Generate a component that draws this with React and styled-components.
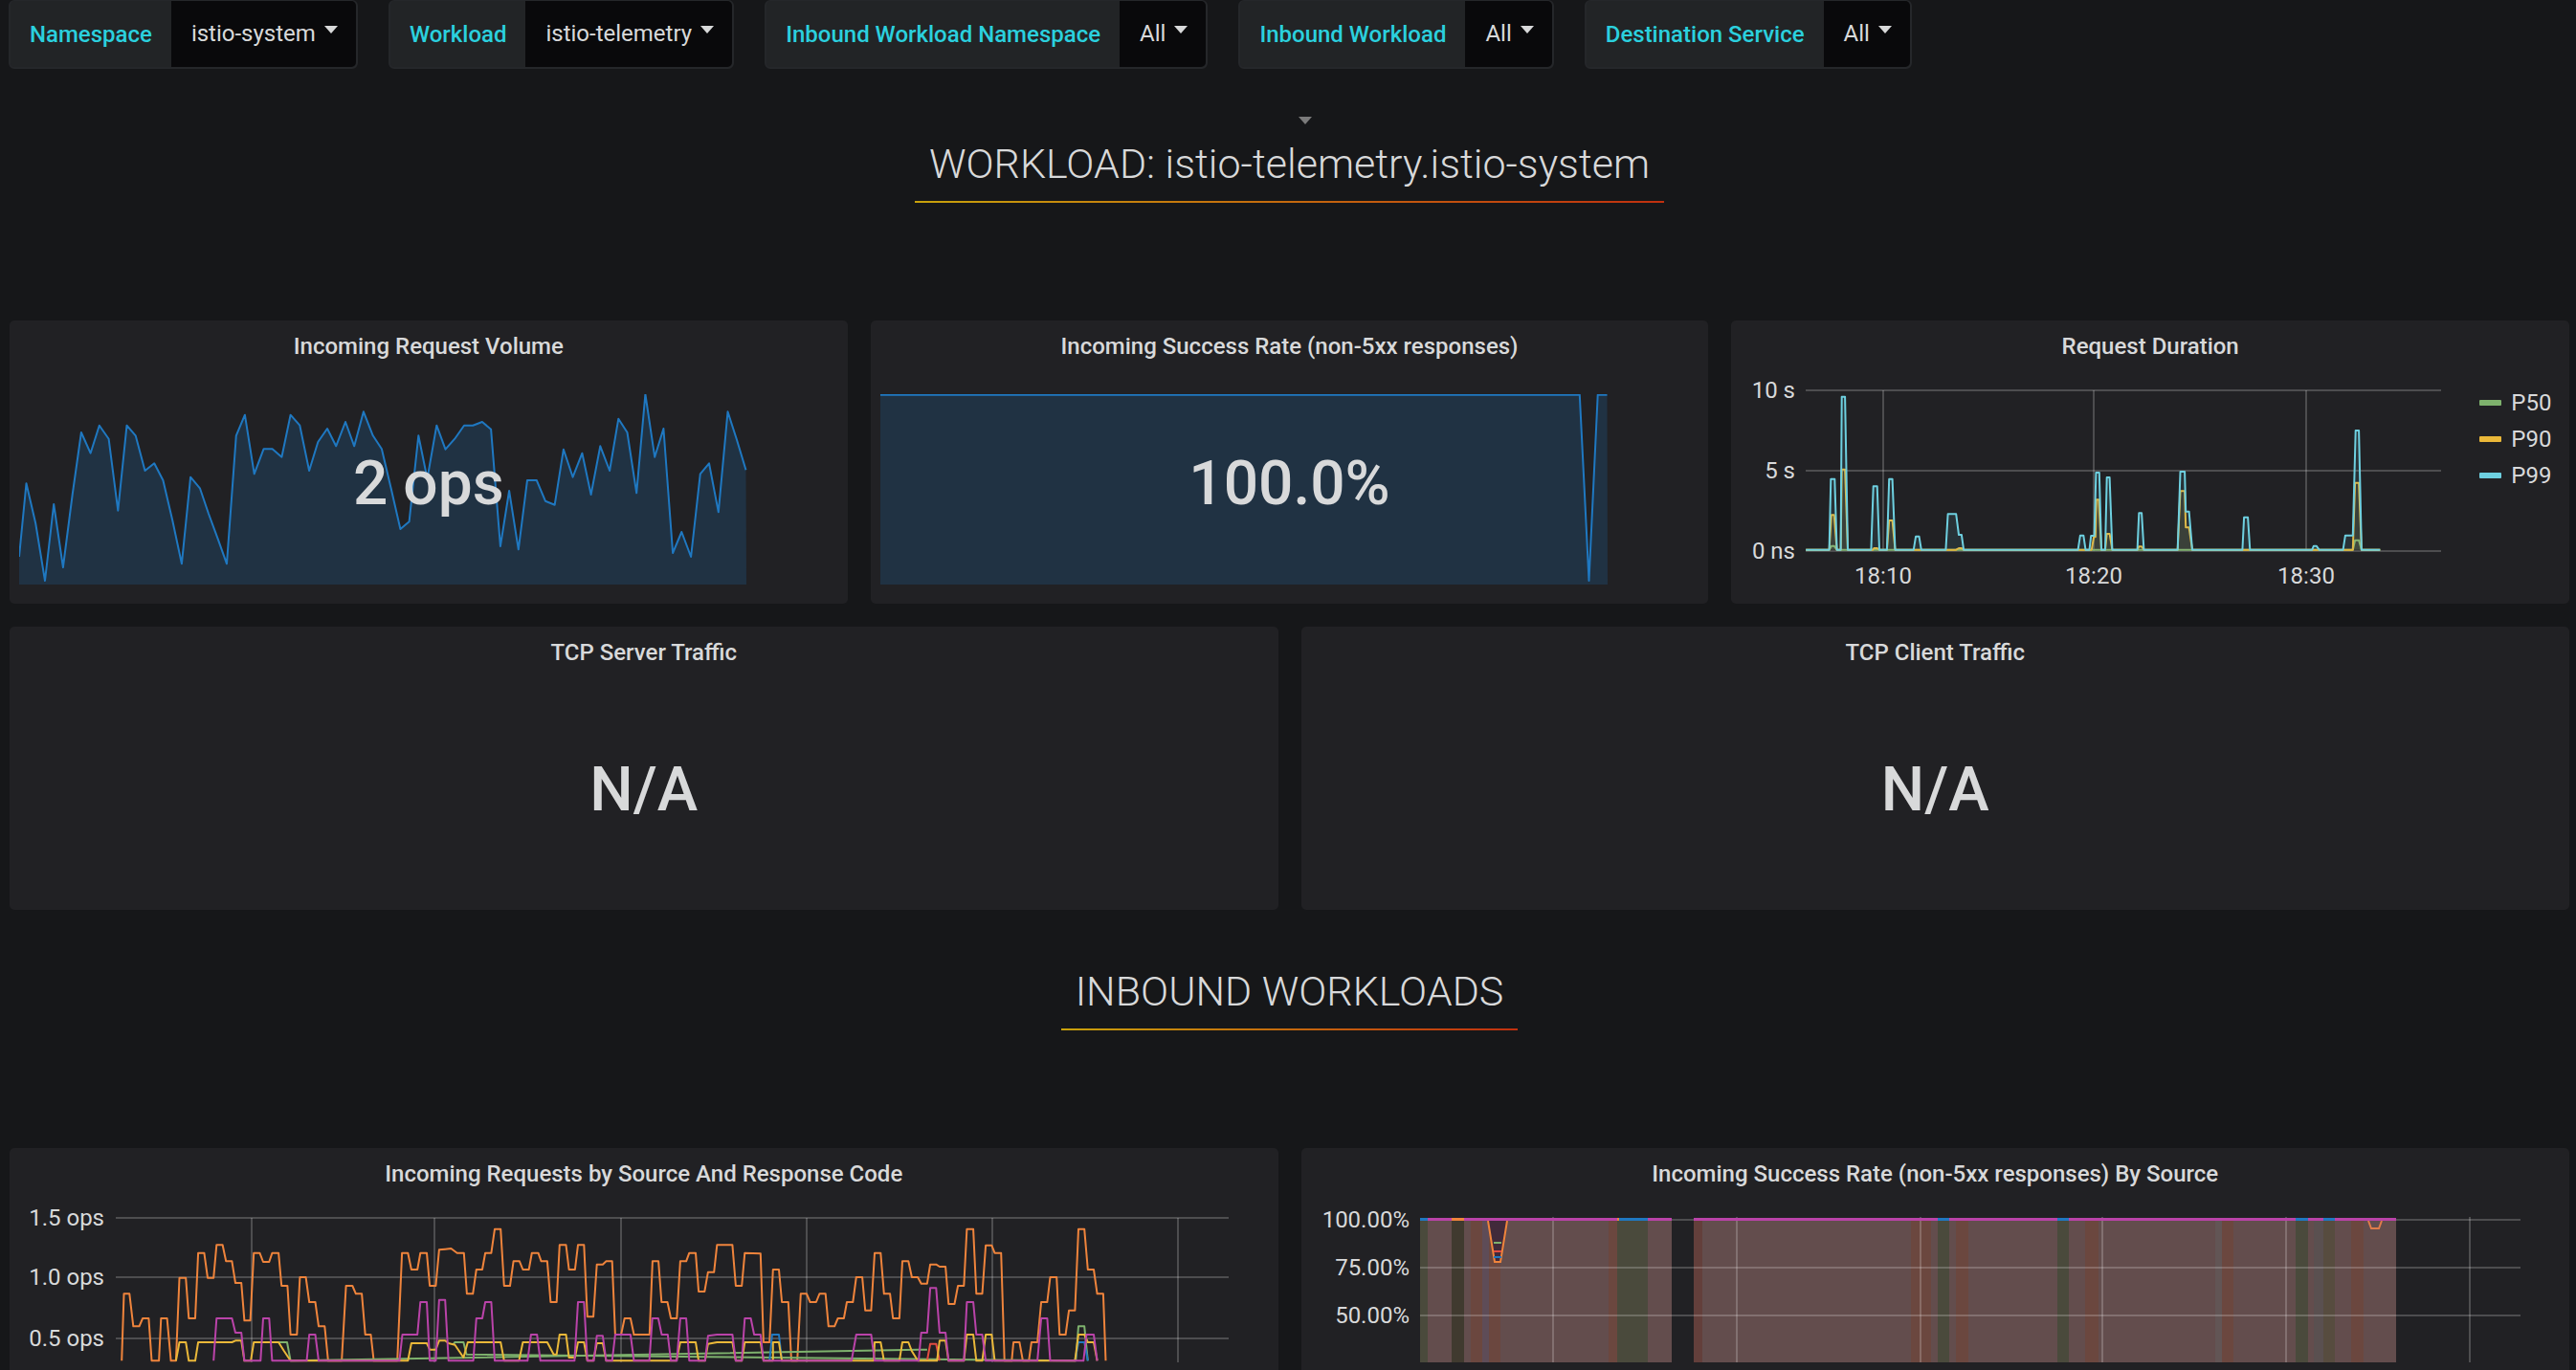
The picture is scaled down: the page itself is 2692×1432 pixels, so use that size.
import React from 'react';
import styled, { createGlobalStyle } from 'styled-components';

const GlobalStyle = createGlobalStyle`
  html, body {
    margin: 0;
    height: 100%;
    background: #161719;
    overflow: hidden;
  }
  #root {
    height: 100%;
  }
`;

const Page = styled.div`
  height: 1432px;
  overflow: hidden;
  padding: 0 7px 0 10px;
  box-sizing: border-box;
  font-family: Roboto, "Liberation Sans", sans-serif;
  color: #d8d9da;
`;

const TemplateBar = styled.div`
  display: flex;
  gap: 32px;
  height: 72px;
  margin-left: -1px;
`;

const VarGroup = styled.div`
  display: flex;
  height: 72px;
  box-sizing: border-box;
  background: #222426;
  border: 2px solid #25272a;
  border-top-width: 1px;
  border-radius: 6px;
  font-size: 24px;
  line-height: 70px;
`;

const VarLabel = styled.div`
  padding: 0 20px;
  font-weight: 500;
  color: #2bd0de;
`;

const VarValue = styled.div`
  display: flex;
  align-items: center;
  gap: 9px;
  padding: 0 19px 2px 21px;
  background: #09090b;
  border-radius: 0 5px 5px 0;
  color: #d8d9da;
`;

const Caret = styled.span`
  width: 0;
  height: 0;
  margin-top: -8px;
  border-left: 7px solid transparent;
  border-right: 7px solid transparent;
  border-top: 8px solid #d8d9da;
`;

const CollapseCaret = styled.div`
  width: 0;
  height: 0;
  margin: 50px auto 0 1347px;
  border-left: 7px solid transparent;
  border-right: 7px solid transparent;
  border-top: 8px solid #7b7b7b;
`;

const HeadingRow = styled.div`
  display: flex;
  justify-content: center;
  margin-top: ${(p) => p.$top}px;
  margin-bottom: ${(p) => p.$bottom}px;
`;

const Heading = styled.h2`
  margin: 0;
  padding: 0 15px 9px;
  font-size: 43px;
  font-weight: 300;
  line-height: 60px;
  color: #d8d9da;
  border-bottom: 2px solid;
  border-image: linear-gradient(90deg, #c8a20c, #c0300f) 1;
`;

const PanelRow = styled.div`
  display: grid;
  grid-template-columns: repeat(${(p) => p.$cols}, 1fr);
  gap: 24px;
  margin-bottom: 24px;
`;

const Panel = styled.section`
  position: relative;
  height: ${(p) => p.$height || 296}px;
  background: #212124;
  border-radius: 5px;
  box-sizing: border-box;
`;

const PanelTitle = styled.h3`
  margin: 0;
  height: 54px;
  font-size: 24px;
  line-height: 54px;
  font-weight: 500;
  text-align: center;
  color: #d8d9da;
`;

const BigValue = styled.div`
  position: absolute;
  left: 0;
  right: 0;
  top: 134px;
  font-size: 64px;
  line-height: 74px;
  font-weight: 500;
  text-align: center;
  color: #d8d9da;
`;

const Spark = styled.svg`
  display: block;
  margin: 23px 0 0 10px;
`;

const GraphBody = styled.div`
  display: flex;
`;

const Graph = styled.svg`
  display: block;
  flex: none;
`;

const Legend = styled.ul`
  list-style: none;
  margin: 13px 0 0 12px;
  padding: 0;
`;

const LegendItem = styled.li`
  display: flex;
  align-items: center;
  gap: 10px;
  height: 38px;
  font-size: 24px;
`;

const Swatch = styled.i`
  width: 23px;
  height: 6px;
  border-radius: 1px;
  background: ${(p) => p.$color};
`;

const AxisText = styled.text`
  font-size: 24px;
  fill: #d8d9da;
  text-anchor: ${(p) => p.$anchor || 'end'};
`;

const GridLine = styled.line`
  stroke: #fff;
  stroke-opacity: 0.2;
  stroke-width: 2;
`;

const Series = styled.polyline`
  fill: ${(p) => (p.$fill ? p.$color : 'none')};
  fill-opacity: ${(p) => (p.$fill ? 0.1 : 1)};
  stroke: ${(p) => p.$color};
  stroke-width: ${(p) => p.$width || 2};
  stroke-linejoin: round;
`;

const parse = (s, fx, fy) =>
  s.trim().split(/\s+/).map((pair) => {
    const [x, y] = pair.split(',').map(Number);
    return `${(+fx(x).toFixed(1))},${(+fy(y).toFixed(1))}`;
  }).join(' ');

/* ---- data, read off the screenshot ---- */

const volume = `35,775 48,545 65,670 82,850 98,610 115,808 132,580 148,385 165,450 181,363 198,405 215,630 231,363 247,395 264,505 281,482 297,535 314,660 331,797 347,525 364,560 380,640 397,720 413,797 430,395 446,330 463,515 480,437 496,437 513,462 529,330 546,363 563,505 579,415 596,373 612,428 629,352 645,428 662,320 679,395 695,437 712,560 729,688 745,665 762,395 778,530 795,363 811,438 828,405 845,363 861,363 878,352 894,375 911,742 927,568 944,752 960,535 977,535 993,600 1010,612 1026,438 1043,525 1060,450 1076,580 1093,428 1110,505 1126,342 1142,385 1159,575 1175,265 1192,462 1208,373 1225,763 1241,697 1258,775 1275,515 1291,482 1308,635 1325,320 1341,405 1358,503`;
const success = `35,267 1308,267 1325,850 1341,267 1358,267`;

const p99 = `155,752 198,752 201,530 208,530 212,752 219,752 221,272 227,272 232,752 275,752 279,553 286,553 290,752 304,752 308,530 314,530 319,752 353,752 357,710 363,710 367,752 412,752 416,640 431,640 436,705 441,705 445,752 655,752 659,707 665,707 669,752 676,752 679,708 685,708 688,510 694,510 698,752 705,752 708,525 713,525 718,752 764,752 767,637 772,637 776,752 838,752 843,507 851,507 853,632 859,632 865,752 957,752 960,650 967,650 971,752 1085,752 1088,740 1093,740 1098,752 1142,752 1146,707 1160,707 1165,378 1171,378 1176,752 1210,752`;
const p90 = `155,752 198,752 202,643 207,643 212,752 219,752 221,500 227,500 232,752 278,752 280,747 286,747 290,752 304,752 308,660 314,660 319,752 431,752 436,747 441,747 445,752 680,752 684,712 687,712 689,595 693,595 698,752 705,752 708,702 713,702 718,752 764,752 767,742 772,742 776,752 838,752 843,568 851,568 853,682 859,682 865,752 1160,752 1164,542 1171,542 1176,752 1210,752`;
const p50 = `155,752 198,752 202,740 207,740 212,752 1160,752 1164,722 1171,722 1176,752 1210,752`;

// left half of the chart comes from one crop, right half from the next
const requests = [
  {
    color: '#EF843C',
    a: `285,700 290,490 303,490 312,592 326,592 334,567 348,567 355,700 372,700 377,567 391,567 400,700 412,700 420,440 435,440 442,567 457,567 464,362 478,362 486,440 500,440 507,337 521,337 529,388 543,388 551,456 565,456 572,574 586,574 594,362 608,362 616,390 630,390 637,362 652,362 659,465 673,465 680,618 695,618 702,438 716,438 724,516 738,516 746,592 760,592 768,700 800,700 810,465 825,465 833,490 847,490 855,618 868,618 875,700 930,700 941,362 955,362 963,414 977,414 984,362 999,362 1006,465 1020,465 1028,352 1042,350 1056,348 1070,362 1086,362 1093,490 1107,490 1115,414 1129,414 1136,362 1150,362 1158,287 1172,287 1180,465 1194,465 1202,388 1216,388 1224,414 1238,414 1245,362 1260,362 1267,388 1281,388 1289,516 1303,516 1310,337 1325,337 1332,414 1346,414 1353,337 1367,337 1375,562 1389,562 1397,398 1411,398 1419,388 1433,388 1440,618 1454,618 1462,567 1476,567 1484,618`,
    b: `5,618 42,618 49,388 63,388 70,516 84,516 92,567 106,567 114,388 128,388 135,362 150,362 157,483 171,483 179,422 193,422 200,337 236,337 244,465 258,465 265,362 302,364 309,642 323,642 331,414 345,414 352,516 367,516 374,700 388,700 396,490 410,490 418,516 432,516 440,490 454,490 461,592 475,592 483,567 497,567 504,516 518,516 526,438 540,438 547,542 561,542 569,362 583,362 591,490 605,490 612,567 627,567 634,388 648,388 656,438 670,438 678,458 692,458 699,398 713,398 721,405 735,405 742,522 756,522 764,465 778,465 785,287 800,287 807,490 821,490 829,338 843,338 850,362 865,362 873,700 890,700 894,642 908,642 916,700 930,700 936,642 950,642 959,516 973,516 980,438 995,438 1002,618 1016,618 1024,542 1038,542 1046,287 1060,287 1068,414 1082,414 1090,490 1104,490 1110,700`,
  },
  {
    color: '#7EB26D',
    a: `652,642 672,642 680,700`,
    b: `672,665 692,665`,
  },
  {
    color: '#7EB26D',
    a: `1060,650 1065,642 1085,642 1092,680`,
    b: `1040,700 1046,592 1060,592 1068,700`,
  },
  {
    color: '#1F78C1',
    b: `323,700 329,618 345,618 352,700`,
  },
  {
    color: '#1F78C1',
    b: `1038,700 1046,642 1060,642 1068,700`,
  },
  {
    color: '#E24D42',
    b: `692,700 699,647 713,647 721,700`,
  },
  {
    color: '#EAB839',
    a: `412,700 420,642 435,642 442,700 457,700 464,642 543,642 551,637 565,637 572,700 587,700 594,642 652,642 665,670 680,700 955,700 963,645 999,645 1006,665 1020,665 1028,637 1042,637 1050,645 1065,650 1085,690 1095,642 1172,642 1180,700 1215,700 1224,642 1281,642 1296,680 1303,680 1310,618 1325,618 1332,690 1346,690 1353,642 1367,642 1375,700 1389,700 1397,645 1411,645 1419,700`,
    b: `105,700 114,642 150,642 157,700 172,700 179,647 200,642 236,642 244,700 258,700 265,642 302,642 309,700 331,700 331,642 345,642 352,700 567,700 569,642 583,642 591,700 627,700 634,642 648,642 656,670 670,700 715,700 721,637 735,637 742,700 778,700 785,618 800,618 807,700 821,700 829,618 843,618 850,700 1038,700 1046,618 1060,618 1068,642 1082,642 1090,700`,
  },
  {
    color: '#BA43A9',
    a: `500,700 507,567 543,567 551,612 565,612 572,700 610,700 616,567 630,567 637,700 718,700 724,618 738,618 746,700 935,700 942,618 977,618 984,516 999,516 1006,700 1020,700 1028,509 1042,509 1050,700 1108,700 1115,567 1129,567 1136,516 1150,516 1158,700 1235,700 1243,618 1257,618 1265,700 1345,700 1353,516 1367,516 1375,700 1390,700 1397,622 1411,622 1419,700 1433,700 1440,618 1476,618 1484,700 1520,700 1527,567 1541,567 1549,618 1563,618`,
    b: `92,700 106,700 114,567 128,567 135,700 172,700 179,622 200,618 236,618 244,700 258,700 265,567 279,567 287,618 302,618 309,700 515,700 526,618 561,618 569,700 672,700 678,612 692,612 699,472 713,472 721,612 735,612 742,700 778,700 785,516 800,516 807,618 821,618 829,700 950,700 959,567 973,567 980,700 1058,700 1065,618 1082,618 1090,700`,
  },
];

// page x ranges of the coloured stripes in the success rate chart
const BASE = '#634d4d';
const GREEN = '#4a4a3c';
const RED = '#6b473f';
const stripes = [
  [1484, 1492, GREEN], [1517, 1530, '#403a2f'], [1537, 1549, RED], [1549, 1556, '#5e4c57'], [1556, 1568, RED],
  [1681, 1690, RED], [1690, 1722, GREEN], [1770, 1779, '#633f3b'], [1997, 2018, RED], [2025, 2037, GREEN],
  [2044, 2057, RED], [2150, 2162, GREEN], [2179, 2193, RED], [2315, 2322, '#625555'], [2322, 2334, RED],
  [2399, 2412, GREEN], [2418, 2428, '#5a5050'], [2428, 2440, '#574c3f'], [2457, 2470, RED],
];
const topTicks = [
  [1484, 1492, '#1F78C1'], [1517, 1530, '#EF843C'], [1690, 1692, '#EF843C'], [1692, 1722, '#1F78C1'],
  [2025, 2037, '#1F78C1'], [2150, 2162, '#1F78C1'], [2399, 2412, '#1F78C1'], [2428, 2440, '#1F78C1'],
];

const variables = [
  ['Namespace', 'istio-system'],
  ['Workload', 'istio-telemetry'],
  ['Inbound Workload Namespace', 'All'],
  ['Inbound Workload', 'All'],
  ['Destination Service', 'All'],
];

/* ---- charts ---- */

function Sparkline({ points }) {
  const fx = (x) => (x - 35) / 1.742;
  const fy = (y) => (y - 265) / 3;
  const line = parse(points, fx, fy);
  return (
    <Spark width="762" height="199" viewBox="0 0 762 199">
      <polygon points={`0,199 ${line} 760,199`} fill="#1F78C1" fillOpacity="0.2" />
      <Series points={line} $color="#1F78C1" />
    </Spark>
  );
}

function DurationGraph() {
  // origin of the svg is at page (1810, 395)
  const fx = (x) => 1800 + x / 1.758 - 1810;
  const fy = (y) => 330 + y / 3 - 395;
  const rows = [[19, '10 s'], [103, '5 s'], [187, '0 ns']];
  const cols = [[159, '18:10'], [379, '18:20'], [601, '18:30']];
  return (
    <Graph width="770" height="232" viewBox="0 0 770 232">
      {rows.map(([y, text]) => (
        <g key={text}>
          <GridLine x1="78" x2="742" y1={y} y2={y} />
          <AxisText x="67" y={y + 8}>{text}</AxisText>
        </g>
      ))}
      {cols.map(([x, text]) => (
        <g key={text}>
          <GridLine x1={x} x2={x} y1="19" y2="187" />
          <AxisText x={x} y="221" $anchor="middle">{text}</AxisText>
        </g>
      ))}
      <Series points={parse(p50, fx, fy)} $color="#7EB26D" $fill />
      <Series points={parse(p90, fx, fy)} $color="#EAB839" $fill />
      <Series points={parse(p99, fx, fy)} $color="#6ED0E0" $fill />
    </Graph>
  );
}

function RequestsGraph() {
  // origin of the svg is at page (10, 1275)
  const fxA = (x) => x / 2.24 - 10;
  const fxB = (x) => 660 + x / 2.24 - 10;
  const fy = (y) => 1210 + y / 3 - 1275;
  const rows = [[19, '1.5 ops'], [81, '1.0 ops'], [145, '0.5 ops']];
  const cols = [253, 444, 639, 833, 1027, 1221];
  return (
    <Graph width="1325" height="170" viewBox="0 0 1325 170">
      {rows.map(([y, text]) => (
        <g key={text}>
          <GridLine x1="111" x2="1274" y1={y} y2={y} />
          <AxisText x="99" y={y + 8}>{text}</AxisText>
        </g>
      ))}
      {cols.map((x) => <GridLine key={x} x1={x} x2={x} y1="19" y2="170" />)}
      {requests.map((s, i) => (
        <Series
          key={i}
          $color={s.color}
          points={[s.a && parse(s.a, fxA, fy), s.b && parse(s.b, fxB, fy)].filter(Boolean).join(' ')}
        />
      ))}
    </Graph>
  );
}

function SuccessGraph() {
  // origin of the svg is at page (1360, 1275)
  const ox = 1360;
  const rows = [[21, '100.00%'], [71, '75.00%'], [121, '50.00%']];
  const cols = [1623, 1815, 2007, 2197, 2389, 2581];
  return (
    <Graph width="1325" height="170" viewBox="0 0 1325 170">
      <rect x={1484 - ox} y="19" width="263" height="151" fill={BASE} />
      <rect x={1770 - ox} y="19" width="734" height="151" fill={BASE} />
      {stripes.map(([a, b, color]) => (
        <rect key={a} x={a - ox} y="19" width={b - a} height="151" fill={color} />
      ))}
      {rows.map(([y, text]) => (
        <g key={text}>
          <GridLine x1={1484 - ox} x2={2634 - ox} y1={y} y2={y} />
          <AxisText x={1473 - ox} y={y + 8}>{text}</AxisText>
        </g>
      ))}
      {cols.map((x) => <GridLine key={x} x1={x - ox} x2={x - ox} y1="18" y2="170" />)}
      <polygon points="195,22 202,65 208,65 215,22" fill="#412a3a" />
      <polyline points="195,22 202,65 208,65 215,22" fill="none" stroke="#EF843C" strokeWidth="2" />
      <rect x="201" y="44" width="8" height="2" fill="#7EB26D" />
      <rect x="201" y="53" width="8" height="2" fill="#E24D42" />
      <rect x="201" y="59" width="8" height="2" fill="#1F78C1" />
      <polyline points="1115,22 1118,30 1126,30 1129,22" fill="none" stroke="#e07b4a" strokeWidth="2" />
      <rect x={1484 - ox} y="19" width="263" height="3" fill="#BA43A9" />
      <rect x={1770 - ox} y="19" width="734" height="3" fill="#BA43A9" />
      {topTicks.map(([a, b, color]) => (
        <rect key={a} x={a - ox} y="19" width={b - a} height="3" fill={color} />
      ))}
    </Graph>
  );
}

export default function App() {
  return (
    <Page>
      <GlobalStyle />
      <TemplateBar>
        {variables.map(([label, value]) => (
          <VarGroup key={label}>
            <VarLabel>{label}</VarLabel>
            <VarValue>{value}<Caret /></VarValue>
          </VarGroup>
        ))}
      </TemplateBar>

      <CollapseCaret />
      <HeadingRow $top={11} $bottom={123}>
        <Heading>WORKLOAD: istio-telemetry.istio-system</Heading>
      </HeadingRow>

      <PanelRow $cols={3}>
        <Panel>
          <PanelTitle>Incoming Request Volume</PanelTitle>
          <Sparkline points={volume} />
          <BigValue>2 ops</BigValue>
        </Panel>
        <Panel>
          <PanelTitle>Incoming Success Rate (non-5xx responses)</PanelTitle>
          <Sparkline points={success} />
          <BigValue>100.0%</BigValue>
        </Panel>
        <Panel>
          <PanelTitle>Request Duration</PanelTitle>
          <GraphBody>
            <DurationGraph />
            <Legend>
              <LegendItem><Swatch $color="#7EB26D" />P50</LegendItem>
              <LegendItem><Swatch $color="#EAB839" />P90</LegendItem>
              <LegendItem><Swatch $color="#6ED0E0" />P99</LegendItem>
            </Legend>
          </GraphBody>
        </Panel>
      </PanelRow>

      <PanelRow $cols={2}>
        <Panel>
          <PanelTitle>TCP Server Traffic</PanelTitle>
          <BigValue>N/A</BigValue>
        </Panel>
        <Panel>
          <PanelTitle>TCP Client Traffic</PanelTitle>
          <BigValue>N/A</BigValue>
        </Panel>
      </PanelRow>

      <HeadingRow $top={55} $bottom={123}>
        <Heading>INBOUND WORKLOADS</Heading>
      </HeadingRow>

      <PanelRow $cols={2}>
        <Panel $height={400}>
          <PanelTitle>Incoming Requests by Source And Response Code</PanelTitle>
          <RequestsGraph />
        </Panel>
        <Panel $height={400}>
          <PanelTitle>Incoming Success Rate (non-5xx responses) By Source</PanelTitle>
          <SuccessGraph />
        </Panel>
      </PanelRow>
    </Page>
  );
}
